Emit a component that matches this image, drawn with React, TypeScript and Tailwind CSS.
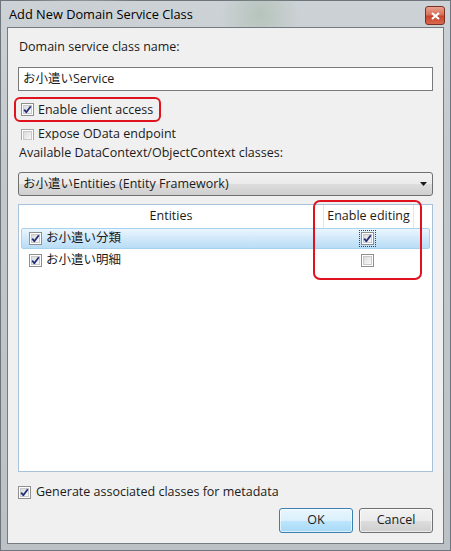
import React from "react";

const FONT = '"Open Sans", "Noto Sans CJK JP", sans-serif';

function Check({ checked = true, dim = false }: { checked?: boolean; dim?: boolean }) {
  return (
    <svg width="13" height="13" viewBox="0 0 13 13" className="shrink-0">
      <defs>
        <linearGradient id="cbg" x1="0" y1="0" x2="1" y2="1">
          <stop offset="0" stopColor="#d8d8d8" />
          <stop offset="1" stopColor="#fbfbfb" />
        </linearGradient>
      </defs>
      <rect x="0.5" y="0.5" width="12" height="12" fill="#fff" stroke={dim ? "#a8a8a8" : "#8f8f8f"} />
      <rect x="2.5" y="2.5" width="8" height="8" fill="url(#cbg)" stroke="#c9c9c9" />
      {checked && (
        <path d="M3.2 6.6 L5.3 9.3 L9.8 3.2" fill="none" stroke="#22307a" strokeWidth="1.8" strokeLinejoin="round" />
      )}
    </svg>
  );
}

export default function App() {
  return (
    <div
      className="w-[451px] h-[551px] relative overflow-hidden text-[12.5px] text-[#1b1b1b]"
      style={{ fontFamily: FONT }}
    >
      <div className="w-full h-full border border-[#6e757c] bg-[linear-gradient(180deg,#cdd2d6_0%,#c3c8cc_30%,#bcc1c6_100%)] pt-[26px] px-[6px] pb-[6px] flex flex-col">
        <div className="absolute left-0 top-0 w-full h-[27px] bg-[radial-gradient(circle_at_260px_14px,rgba(140,170,140,0.35),transparent_40px),radial-gradient(circle_at_80px_20px,rgba(200,205,210,0.5),transparent_60px)]" />
        <div className="absolute left-[9px] top-[5px] leading-[18px] text-[12.8px] text-black">
          Add New Domain Service Class
        </div>
        <div className="absolute left-[425px] top-[6px] w-[20px] h-[19px] rounded-[3px] border border-[#7a3023] bg-[linear-gradient(180deg,#e9a28f_0%,#d8705a_45%,#c8452e_55%,#d9684f_100%)] flex items-center justify-center">
          <svg width="9" height="8" viewBox="0 0 9 8">
            <path d="M1 1 L8 7 M8 1 L1 7" stroke="#fff" strokeWidth="2.2" />
          </svg>
        </div>

        <div className="flex-1 border border-[#737a82] bg-[#f0f0f0] flex flex-col px-[10px] pt-[11px] relative">
          <div className="leading-[16px] pl-[1px]">Domain service class name:</div>

          <div className="mt-[12px] h-[24px] border border-[#7a7a7a] bg-white flex items-center px-[4px]">
            お小遣いService
          </div>

          <div className="mt-[6px] ml-[-4px] w-[147px] h-[25px] border-2 border-[#e0121e] rounded-[6px] flex items-center pl-[5px] gap-[4px]">
            <Check />
            <span className="leading-[16px]">Enable client access</span>
          </div>

          <div className="mt-[4px] h-[14px] overflow-hidden flex items-start gap-[4px] pl-[3px]">
            <div className="mt-[3px]">
              <Check checked={false} dim />
            </div>
            <span className="leading-[16px]">Expose OData endpoint</span>
          </div>

          <div className="mt-[5px] leading-[16px] pl-[1px]">Available DataContext/ObjectContext classes:</div>

          <div className="mt-[11px] h-[24px] rounded-[3px] border border-[#707070] bg-[linear-gradient(180deg,#f2f2f2_0%,#ebebeb_50%,#dddddd_51%,#cfcfcf_100%)] flex items-center justify-between pl-[4px] pr-[5px]">
            <span>お小遣いEntities (Entity Framework)</span>
            <svg width="7" height="4" viewBox="0 0 7 4">
              <path d="M0 0 H7 L3.5 4 Z" fill="#1a1a1a" />
            </svg>
          </div>

          <div className="mt-[8px] h-[268px] border border-[#a9c2dc] bg-white flex flex-col relative">
            <div className="h-[23px] flex items-stretch">
              <div className="flex-1 flex items-center justify-center">Entities</div>
              <div className="w-[91px] border-l border-r border-[#e3e6ea] flex items-center justify-center whitespace-nowrap">
                Enable editing
              </div>
              <div className="w-[18px]" />
            </div>
            <div className="mx-[2px] h-[21px] rounded-[2px] border border-[#a6d2f0] bg-[linear-gradient(180deg,#ebf6fd_0%,#d3eafb_45%,#b9ddf5_100%)] flex items-center">
              <div className="flex-1 flex items-center pl-[7px] gap-[4px]">
                <Check />
                <span className="text-[#1a1a1a]">お小遣い分類</span>
              </div>
              <div className="w-[91px] flex items-center justify-center">
                <div className="p-[1px] outline outline-1 outline-dotted outline-[#444]">
                  <Check />
                </div>
              </div>
              <div className="w-[16px]" />
            </div>
            <div className="mx-[2px] mt-[1px] h-[21px] border border-transparent flex items-center">
              <div className="flex-1 flex items-center pl-[7px] gap-[4px]">
                <Check />
                <span className="text-[#1a1a1a]">お小遣い明細</span>
              </div>
              <div className="w-[91px] flex items-center justify-center">
                <Check checked={false} />
              </div>
              <div className="w-[16px]" />
            </div>
          </div>

          <div className="absolute left-[305px] top-[172px] w-[109px] h-[80px] border-2 border-[#e0121e] rounded-[7px] pointer-events-none" />

          <div className="mt-[12px] flex items-center gap-[5px] h-[16px]">
            <Check />
            <span className="leading-[16px]">Generate associated classes for metadata</span>
          </div>

          <div className="mt-[8px] flex justify-end gap-[6px]">
            <div className="w-[74px] h-[25px] rounded-[3px] border border-[#3c7fb1] bg-[linear-gradient(180deg,#eaf6fd_0%,#d9f0fc_50%,#bee6fd_51%,#a7d9f5_100%)] shadow-[inset_0_0_0_1px_rgba(255,255,255,0.6)] flex items-center justify-center">
              OK
            </div>
            <div className="w-[74px] h-[25px] rounded-[3px] border border-[#707070] bg-[linear-gradient(180deg,#f2f2f2_0%,#ebebeb_50%,#dddddd_51%,#cfcfcf_100%)] shadow-[inset_0_0_0_1px_rgba(255,255,255,0.6)] flex items-center justify-center">
              Cancel
            </div>
          </div>
        </div>
      </div>
    </div>
  );
}
